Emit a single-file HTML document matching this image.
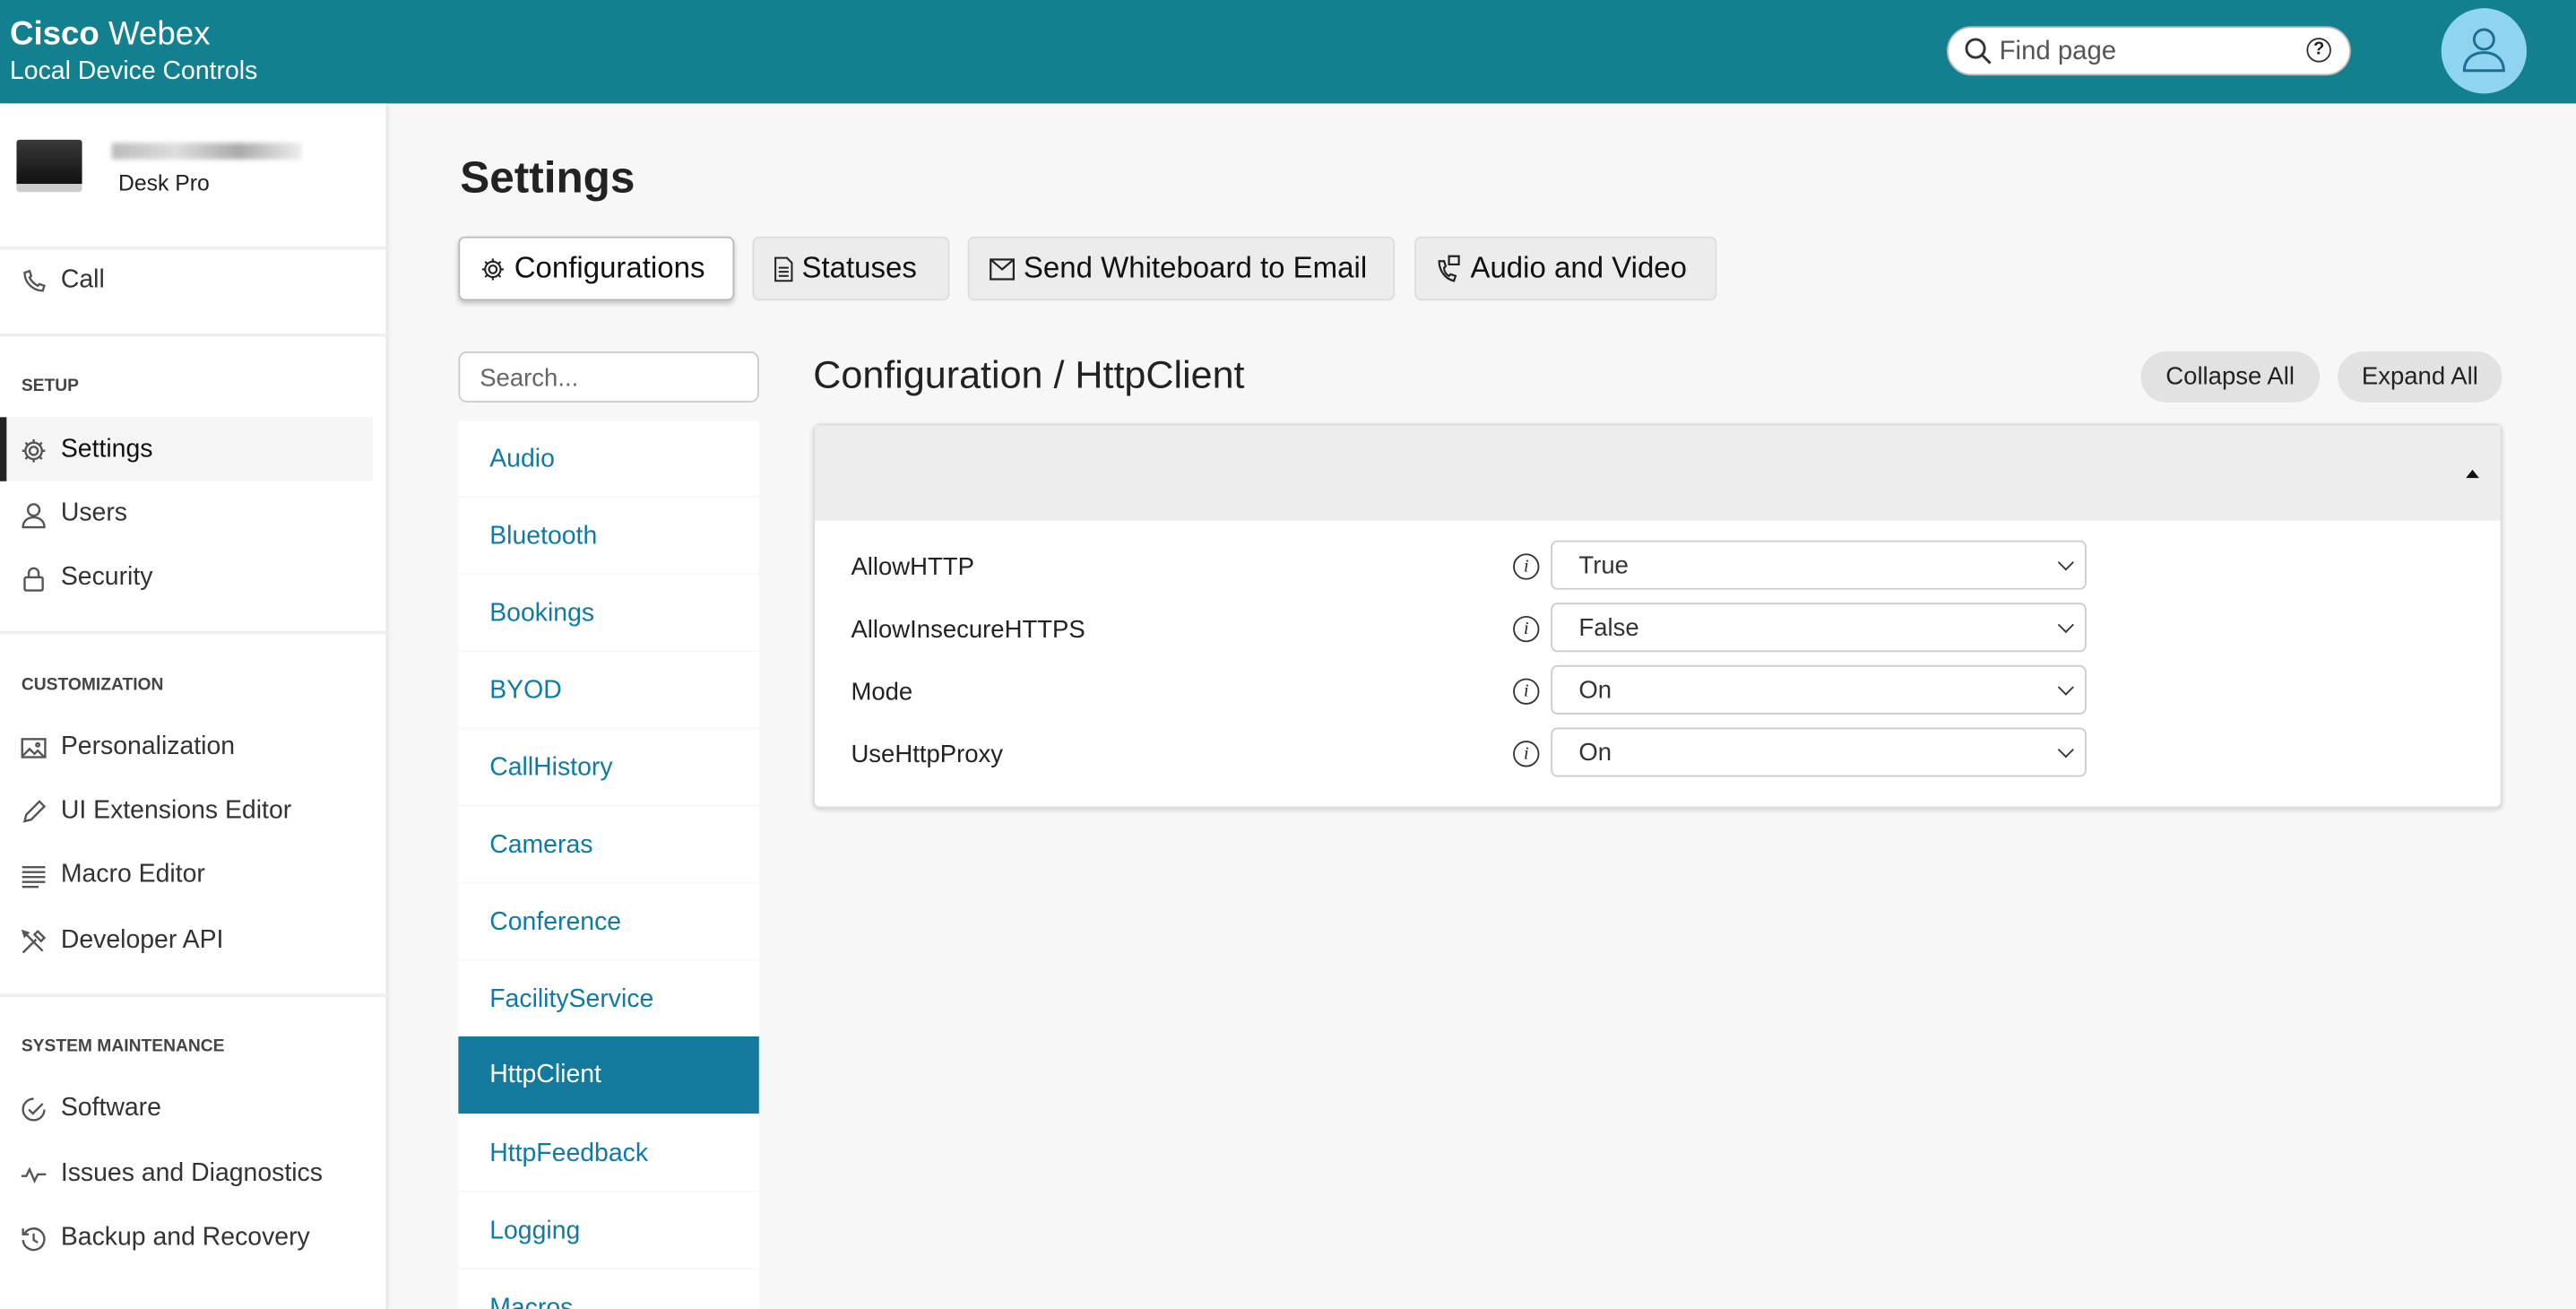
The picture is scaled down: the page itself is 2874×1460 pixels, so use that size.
<!DOCTYPE html>
<html><head><meta charset="utf-8"><style>
*{box-sizing:border-box;margin:0;padding:0}
html,body{width:2874px;height:1460px;overflow:hidden;background:#f7f7f7}
#w{position:absolute;left:0;top:0;width:1568px;height:797px;overflow:hidden;transform:scale(1.8329,1.8319);transform-origin:0 0;font-family:"Liberation Sans",sans-serif;color:#222;background:#f7f7f7}
.a{position:absolute}
.hdr{left:0;top:0;width:1568px;height:63px;background:#13808f}
.side{left:0;top:63px;width:236px;height:734px;background:#fff;border-right:1px solid #e4e4e4;box-shadow:1px 0 3px rgba(0,0,0,.05)}
.div{position:absolute;left:0;width:236px;height:2px;background:#eee}
.ni{position:absolute;left:12px;font-size:15.5px;color:#333;display:flex;align-items:center;gap:8px}
.ni svg{width:17px;height:17px;stroke:#555;fill:none;stroke-width:1.3}
.sec{position:absolute;left:13px;font-size:10.5px;font-weight:bold;color:#444}
.tab{position:absolute;top:144px;height:39px;border:1px solid #ddd;border-radius:4px;background:#ececec;font-size:18px;display:flex;align-items:center;padding-left:12px;gap:5px;color:#111}
.li{position:absolute;left:279px;width:183px;height:46px;background:#fff;font-size:15.5px;color:#0f7aa3;padding:15px 0 0 19px}
.lbl{position:absolute;left:518px;font-size:15px;color:#222}
.sel{position:absolute;left:944px;width:326px;height:30px;border:1px solid #ccc;border-radius:4px;background:#fff;font-size:15px;padding:6px 0 0 16px;color:#333}
.sel:after{content:"";position:absolute;right:8px;top:9px;width:6px;height:6px;border-right:1.8px solid #333;border-bottom:1.8px solid #333;transform:rotate(45deg)}
.inf{position:absolute;left:921px;width:16px;height:16px;border:1.2px solid #333;border-radius:50%;font-size:11px;font-style:italic;font-family:"Liberation Serif",serif;text-align:center;line-height:14px}
.btn{position:absolute;top:214px;height:31px;background:#e2e2e2;border-radius:16px;font-size:15px;color:#222;text-align:center;line-height:31px}
</style></head><body><div id="w">
<div class="a hdr"></div>
<div class="a" style="left:6px;top:10px;color:#fff;font-size:20px"><b>Cisco</b> Webex</div>
<div class="a" style="left:6px;top:35px;color:#fff;font-size:15.5px">Local Device Controls</div>
<div class="a" style="left:1185px;top:16px;width:246px;height:30px;background:#fff;border-radius:15px;border:1px solid #bbb"></div>
<svg class="a" style="left:1195px;top:22px" width="18" height="18" viewBox="0 0 18 18" fill="none" stroke="#333" stroke-width="1.6"><circle cx="7.5" cy="7.5" r="5.5"/><path d="M11.5 11.5l5 5"/></svg>
<div class="a" style="left:1217px;top:23px;font-size:16px;color:#555">Find page</div>
<div class="a" style="left:1404px;top:23px;width:15px;height:15px;border:1.4px solid #333;border-radius:50%;font-size:11px;text-align:center;line-height:13px;font-weight:bold">?</div>
<div class="a" style="left:1486px;top:5px;width:52px;height:52px;border-radius:50%;background:#8fd4f1"></div>
<svg class="a" style="left:1498px;top:15px" width="28" height="30" viewBox="0 0 28 30" fill="none" stroke="#1e6f8f" stroke-width="1.6"><circle cx="14" cy="9" r="6"/><path d="M2 28c0-7 5-11 12-11s12 4 12 11z"/></svg>

<div class="a side"></div>
<div class="a" style="left:10px;top:85px;width:40px;height:32px;background:linear-gradient(#3a3a3a,#111);border-radius:2px;border-bottom:5px solid #ccc"></div>
<div class="a" style="left:68px;top:87px;width:116px;height:10px;background:linear-gradient(90deg,#bbb,#ddd,#aaa,#eee);filter:blur(1.5px)"></div>
<div class="a" style="left:72px;top:104px;font-size:13.5px;color:#222">Desk Pro</div>
<div class="div" style="top:150px"></div>
<div class="ni" style="top:162px"><svg viewBox="0 0 17 17"><path d="M3 3c0 6 5 11 11 11l1-3-3-1-1 1c-2-1-4-3-5-5l1-1-1-3z"/></svg>Call</div>
<div class="div" style="top:203px"></div>
<div class="sec" style="top:229px">SETUP</div>
<div class="a" style="left:0;top:254px;width:227px;height:39px;background:#f5f5f5;border-left:4px solid #222"></div>
<div class="ni" style="top:265px"><svg viewBox="0 0 17 17"><circle cx="8.5" cy="8.5" r="2.5"/><path d="M8.5 1.5v2.5M8.5 13v2.5M1.5 8.5h2.5M13 8.5h2.5M3.5 3.5l1.8 1.8M11.7 11.7l1.8 1.8M3.5 13.5l1.8-1.8M11.7 5.3l1.8-1.8"/><circle cx="8.5" cy="8.5" r="5"/></svg><span style="color:#111">Settings</span></div>
<div class="ni" style="top:304px"><svg viewBox="0 0 17 17"><circle cx="8.5" cy="5.5" r="3.5"/><path d="M2 16c0-4 3-6 6.5-6s6.5 2 6.5 6z"/></svg>Users</div>
<div class="ni" style="top:343px"><svg viewBox="0 0 17 17"><rect x="3" y="7.5" width="11" height="8" rx="1"/><path d="M5.5 7.5V5a3 3 0 0 1 6 0v2.5"/></svg>Security</div>
<div class="div" style="top:384px"></div>
<div class="sec" style="top:411px">CUSTOMIZATION</div>
<div class="ni" style="top:446px"><svg viewBox="0 0 17 17"><rect x="1.5" y="3" width="14" height="11"/><path d="M2 13l4-4 3 3 2-2 4 4"/><circle cx="11" cy="6.5" r="1"/></svg>Personalization</div>
<div class="ni" style="top:485px"><svg viewBox="0 0 17 17"><path d="M3 14l1-4 8-8 3 3-8 8-4 1z"/></svg>UI Extensions Editor</div>
<div class="ni" style="top:524px"><svg viewBox="0 0 17 17"><path d="M1.5 3h14M1.5 6h14M1.5 9h14M1.5 12h14M1.5 15h10"/></svg>Macro Editor</div>
<div class="ni" style="top:564px"><svg viewBox="0 0 17 17"><path d="M2 15l8-8M3 3l11 11M11 2l4 4-2 2-4-4zM2 2l3 1-2 2z"/></svg>Developer API</div>
<div class="div" style="top:605px"></div>
<div class="sec" style="top:631px">SYSTEM MAINTENANCE</div>
<div class="ni" style="top:666px"><svg viewBox="0 0 17 17"><path d="M15 8.5A6.5 6.5 0 1 1 8.5 2"/><path d="M5.5 8.5l2.5 2.5 6-6"/></svg>Software</div>
<div class="ni" style="top:706px"><svg viewBox="0 0 17 17"><path d="M1 9h3l2-4 3 7 2-4h5"/></svg>Issues and Diagnostics</div>
<div class="ni" style="top:745px"><svg viewBox="0 0 17 17"><path d="M3 5a6.5 6.5 0 1 1-1 4"/><path d="M2 2v3.5h3.5M8.5 5v4l2.5 1.5"/></svg>Backup and Recovery</div>

<div class="a" style="left:280px;top:93px;font-size:27px;font-weight:bold;color:#222">Settings</div>
<div class="tab" style="left:279px;width:168px;background:#fff;border-color:#bbb;box-shadow:0 2px 3px rgba(0,0,0,.2)"><svg width="16" height="16" viewBox="0 0 17 17" fill="none" stroke="#222" stroke-width="1.2"><circle cx="8.5" cy="8.5" r="2.5"/><circle cx="8.5" cy="8.5" r="5"/><path d="M8.5 1.5v2.5M8.5 13v2.5M1.5 8.5h2.5M13 8.5h2.5M3.5 3.5l1.8 1.8M11.7 11.7l1.8 1.8M3.5 13.5l1.8-1.8M11.7 5.3l1.8-1.8"/></svg>Configurations</div>
<div class="tab" style="left:458px;width:120px"><svg width="12" height="16" viewBox="0 0 12 16" fill="none" stroke="#222" stroke-width="1.1"><path d="M1 1h7l3 3v11H1z M3 7h6M3 9.5h6M3 12h6"/></svg>Statuses</div>
<div class="tab" style="left:589px;width:260px"><svg width="16" height="14" viewBox="0 0 16 14" fill="none" stroke="#222" stroke-width="1.2"><rect x="1" y="1" width="14" height="12"/><path d="M1 1l7 6 7-6"/></svg>Send Whiteboard to Email</div>
<div class="tab" style="left:861px;width:184px"><svg width="16" height="17" viewBox="0 0 16 17" fill="none" stroke="#222" stroke-width="1.2"><path d="M2 4c0 6 4 11 9 12l1-3-3-1-1 1c-2-1-3-3-3-5l1-1-1-3zM8 1h6v5H8z"/></svg>Audio and Video</div>

<div class="a" style="left:279px;top:214px;width:183px;height:31px;background:#fff;border:1px solid #ccc;border-radius:5px;font-size:15px;color:#666;padding:7px 0 0 12px">Search...</div>
<div class="li" style="top:256px">Audio</div>
<div class="li" style="top:303px">Bluetooth</div>
<div class="li" style="top:350px">Bookings</div>
<div class="li" style="top:397px">BYOD</div>
<div class="li" style="top:444px">CallHistory</div>
<div class="li" style="top:491px">Cameras</div>
<div class="li" style="top:538px">Conference</div>
<div class="li" style="top:585px">FacilityService</div>
<div class="li" style="top:631px;height:47px;background:#137a9e;color:#fff">HttpClient</div>
<div class="li" style="top:679px">HttpFeedback</div>
<div class="li" style="top:726px">Logging</div>
<div class="li" style="top:773px">Macros</div>

<div class="a" style="left:495px;top:215px;font-size:23.5px;color:#222">Configuration / HttpClient</div>
<div class="btn" style="left:1303px;width:109px">Collapse All</div>
<div class="btn" style="left:1423px;width:100px">Expand All</div>
<div class="a" style="left:495px;top:258px;width:1028px;height:234px;background:#fff;border:1px solid #ddd;border-radius:4px;box-shadow:0 1px 3px rgba(0,0,0,.15)"></div>
<div class="a" style="left:496px;top:259px;width:1026px;height:58px;background:#ededed"></div>
<div class="a" style="left:1501px;top:286px;width:0;height:0;border-left:4.5px solid transparent;border-right:4.5px solid transparent;border-bottom:5px solid #111"></div>
<div class="lbl" style="top:337px">AllowHTTP</div>
<div class="lbl" style="top:375px">AllowInsecureHTTPS</div>
<div class="lbl" style="top:413px">Mode</div>
<div class="lbl" style="top:451px">UseHttpProxy</div>
<div class="inf" style="top:337px">i</div>
<div class="inf" style="top:375px">i</div>
<div class="inf" style="top:413px">i</div>
<div class="inf" style="top:451px">i</div>
<div class="sel" style="top:329px">True</div>
<div class="sel" style="top:367px">False</div>
<div class="sel" style="top:405px">On</div>
<div class="sel" style="top:443px">On</div>
</div></body></html>
